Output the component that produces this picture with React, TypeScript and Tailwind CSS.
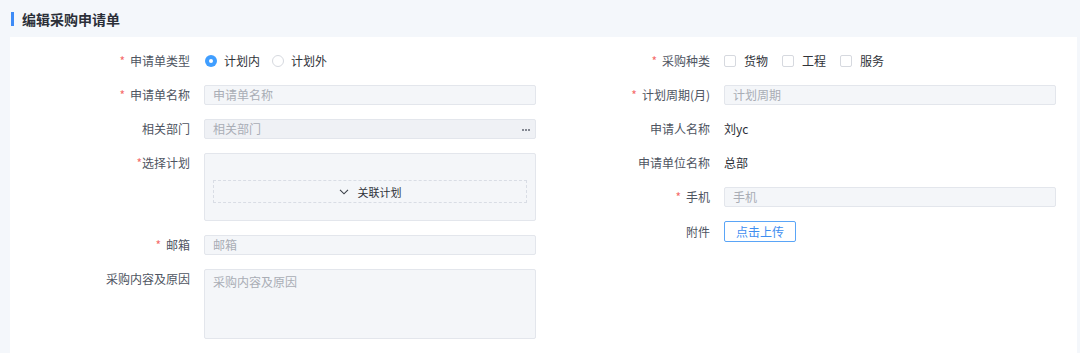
import React from 'react';

const FONT = { fontFamily: '"Noto Sans CJK SC", "Noto Sans", sans-serif' };

const Req: React.FC<{ tight?: boolean }> = ({ tight }) => (
  <span className={`text-[#f56c6c] ${tight ? 'mr-0' : 'mr-[5px]'}`}>*</span>
);

interface RowProps {
  label: string;
  required?: boolean;
  tight?: boolean;
  top?: boolean;
  children: React.ReactNode;
}

const Row: React.FC<RowProps> = ({ label, required, tight, top, children }) => (
  <div className={`flex ${top ? 'items-start' : 'items-center'}`}>
    <div className="w-[180px] shrink-0 text-right text-[12px] leading-[20px] text-[#4e5461]">
      {required && <Req tight={tight} />}
      {label}
    </div>
    <div className="ml-[14px] flex w-[332px] shrink-0 items-center">{children}</div>
  </div>
);

const Input: React.FC<{ placeholder: string; dots?: boolean; dark?: boolean }> = ({ placeholder, dots, dark }) => (
  <div
    className={`flex h-[20px] w-full items-center justify-between rounded-[2px] border border-[#e3e6ec] pl-[8px] pr-[5px] text-[12px] text-[#a9adb5] ${
      dark ? 'bg-[#eff1f5]' : 'bg-[#f4f6f9]'
    }`}
  >
    <span className="leading-[18px]">{placeholder}</span>
    {dots && (
      <span className="flex items-center gap-[1px] pt-[2px]">
        <span className="h-[2px] w-[2px] rounded-full bg-[#606470]" />
        <span className="h-[2px] w-[2px] rounded-full bg-[#606470]" />
        <span className="h-[2px] w-[2px] rounded-full bg-[#606470]" />
      </span>
    )}
  </div>
);

const Radio: React.FC<{ checked?: boolean; label: string }> = ({ checked, label }) => (
  <div className="flex items-center">
    {checked ? (
      <span className="flex h-[12px] w-[12px] items-center justify-center rounded-full bg-[#409eff]">
        <span className="h-[4px] w-[4px] rounded-full bg-white" />
      </span>
    ) : (
      <span className="h-[12px] w-[12px] rounded-full border border-[#d6d9df] bg-white" />
    )}
    <span className="ml-[7px] text-[12px] leading-[20px] text-[#303339]">{label}</span>
  </div>
);

const Check: React.FC<{ label: string }> = ({ label }) => (
  <div className="flex items-center">
    <span className="h-[12px] w-[12px] rounded-[2px] border border-[#d6d9df] bg-white" />
    <span className="ml-[8px] text-[12px] leading-[20px] text-[#303339]">{label}</span>
  </div>
);

export default function App() {
  return (
    <div className="min-h-[353px] bg-[#f4f7fb] pl-[10px] pr-[3px]" style={FONT}>
      <div className="flex h-[37px] items-center">
        <span className="ml-[1px] h-[14px] w-[3px] bg-[#3d8bf7]" />
        <span className="ml-[8px] text-[14px] font-bold leading-[20px] text-[#2b2f38]">编辑采购申请单</span>
      </div>

      <div className="flex w-[1067px] bg-white pb-[24px] pt-[14px]">
        <div className="flex w-[520px] shrink-0 flex-col gap-[14px]">
          <Row label="申请单类型" required>
            <div className="flex items-center gap-[12px] pl-[1px]">
              <Radio checked label="计划内" />
              <Radio label="计划外" />
            </div>
          </Row>
          <Row label="申请单名称" required>
            <Input placeholder="申请单名称" />
          </Row>
          <Row label="相关部门">
            <Input placeholder="相关部门" dots dark />
          </Row>
          <Row label="选择计划" required tight top>
            <div className="flex h-[68px] w-full flex-col rounded-[2px] border border-[#e3e6ec] bg-[#f4f6f9] px-[8px] pt-[26px]">
              <div className="flex h-[23px] items-center justify-center gap-[9px] border border-dashed border-[#d9dde5] text-[11px] text-[#303339]">
                <svg width="10" height="6" viewBox="0 0 10 6" fill="none">
                  <polyline points="1,0.8 5,4.8 9,0.8" stroke="#3a3f48" strokeWidth="1.1" />
                </svg>
                <span className="leading-[16px]">关联计划</span>
              </div>
            </div>
          </Row>
          <Row label="邮箱" required>
            <Input placeholder="邮箱" />
          </Row>
          <Row label="采购内容及原因" top>
            <div className="h-[70px] w-full rounded-[2px] border border-[#e3e6ec] bg-[#f4f6f9] px-[8px] pt-[2px] text-[12px] leading-[20px] text-[#a9adb5]">
              采购内容及原因
            </div>
          </Row>
        </div>

        <div className="flex w-[526px] shrink-0 flex-col gap-[14px]">
          <Row label="采购种类" required>
            <div className="flex items-center gap-[14px]">
              <Check label="货物" />
              <Check label="工程" />
              <Check label="服务" />
            </div>
          </Row>
          <Row label="计划周期(月)" required>
            <Input placeholder="计划周期" />
          </Row>
          <Row label="申请人名称">
            <span className="text-[12px] leading-[20px] text-[#2b2f38]">刘yc</span>
          </Row>
          <Row label="申请单位名称">
            <span className="text-[12px] leading-[20px] text-[#2b2f38]">总部</span>
          </Row>
          <Row label="手机" required>
            <Input placeholder="手机" />
          </Row>
          <Row label="附件">
            <button className="flex h-[21px] w-[72px] items-center justify-center rounded-[2px] border border-[#5aa5f7] bg-white text-[12px] leading-[19px] text-[#3f8ef0]">
              点击上传
            </button>
          </Row>
        </div>
      </div>
    </div>
  );
}
